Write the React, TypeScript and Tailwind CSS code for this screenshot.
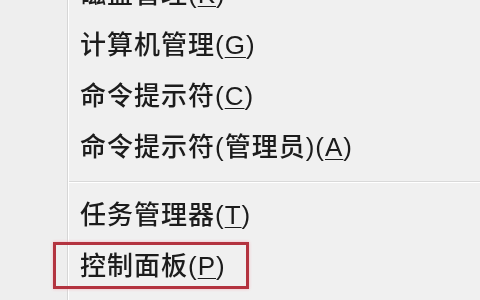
import React from 'react';

const items = [
  { label: '磁盘管理', key: 'K' },
  { label: '计算机管理', key: 'G' },
  { label: '命令提示符', key: 'C' },
  { label: '命令提示符(管理员)', key: 'A' },
];

function MenuItem({ label, hotkey }: { label: string; hotkey: string }) {
  return (
    <div className="h-[51px] flex items-center pl-[11px] text-[26px] font-medium tracking-[1px] text-[#1c1c1c] whitespace-nowrap">
      {label}(<span className="underline underline-offset-[3px] decoration-1">{hotkey}</span>)
    </div>
  );
}

export default function App() {
  return (
    <div
      className="w-[480px] h-[300px] overflow-hidden flex bg-[#f0f0f0] blur-[0.4px]"
      style={{ fontFamily: '"Liberation Sans", "Noto Sans CJK SC", sans-serif' }}
    >
      <div className="w-[68px] shrink-0 bg-[#eeeeee] border-r border-[#d6d6d6]" />
      <div className="flex-1 border-l border-white flex flex-col mt-[-31px]">
        {items.map((it) => (
          <MenuItem key={it.key} label={it.label} hotkey={it.key} />
        ))}
        <div className="h-[17px] flex flex-col justify-center">
          <div className="h-px bg-[#d9d9d9]" />
          <div className="h-px bg-white" />
        </div>
        <MenuItem label="任务管理器" hotkey="T" />
        <div className="relative">
          <MenuItem label="控制面板" hotkey="P" />
          <div className="absolute left-[-16px] top-[1px] w-[196px] h-[47px] border-[3px] border-[#b3333f] shadow-[0_0_3px_#f3b6bf]" />
        </div>
      </div>
    </div>
  );
}
